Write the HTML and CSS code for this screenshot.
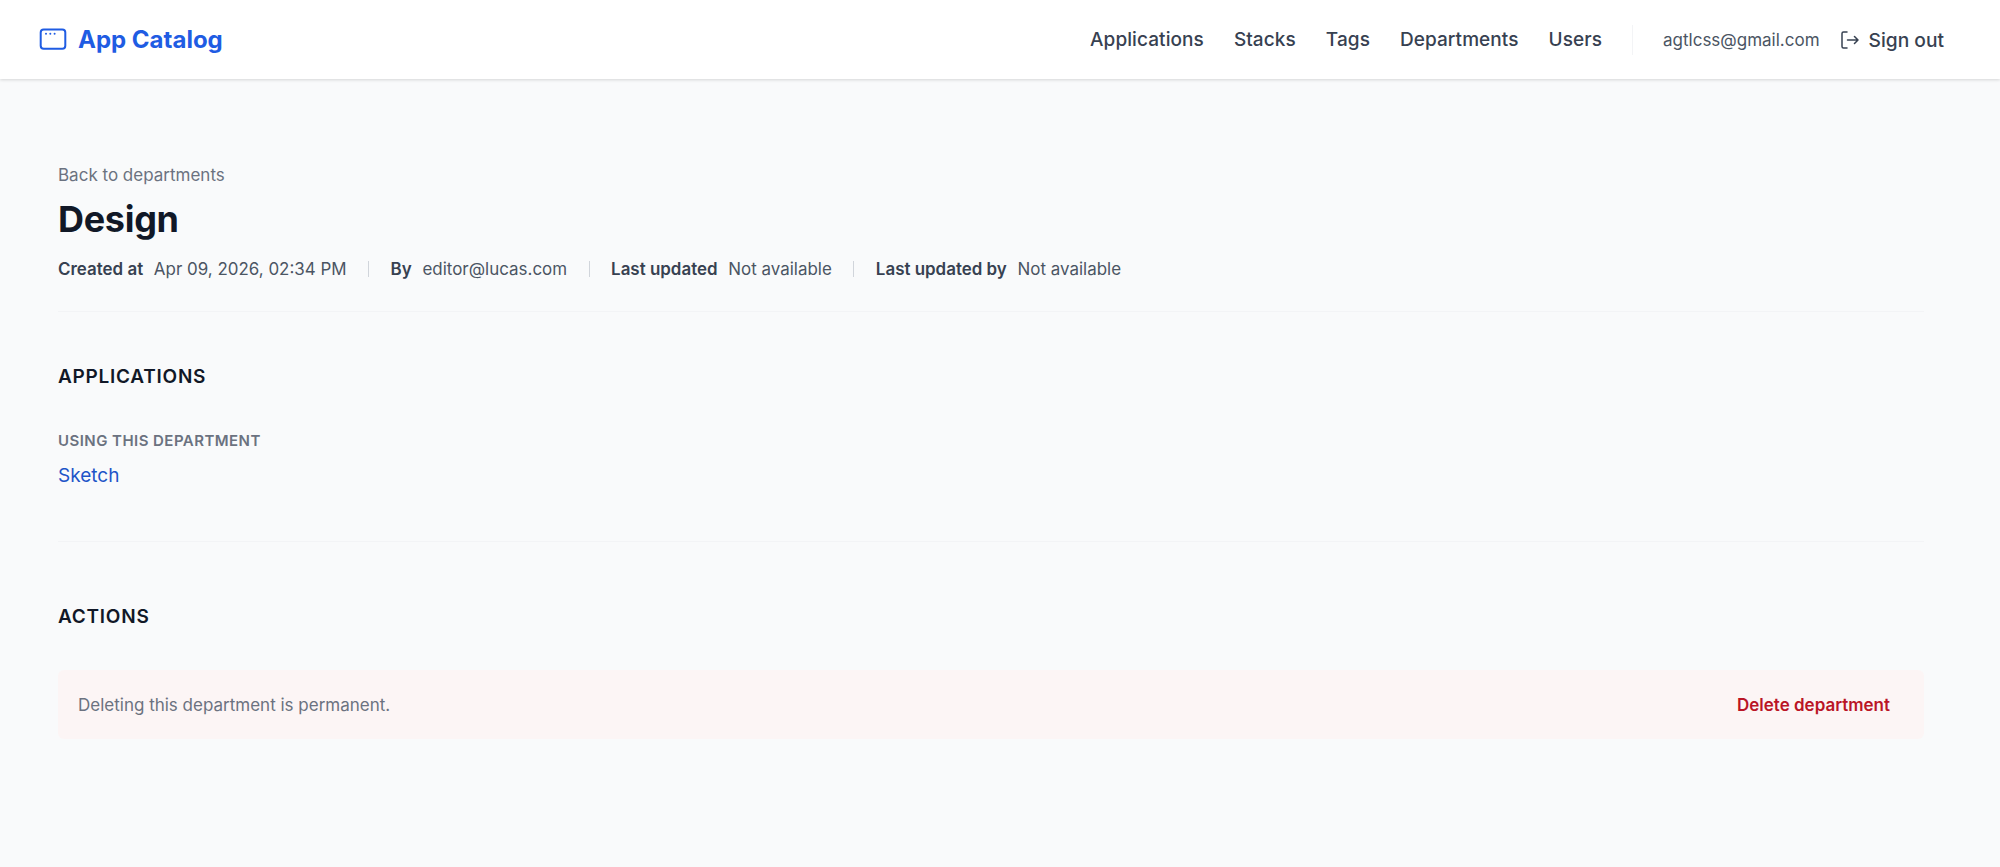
FILE: index.html
```html
<!DOCTYPE html>
<html lang="en">
<head>
    <meta charset="UTF-8">
    <meta name="viewport" content="width=device-width, initial-scale=1.0">
    <title>Design - App Catalog</title>
    <link rel="stylesheet" href="styles.css">
</head>
<body>
    <header class="navbar">
        <a class="brand" href="#">
            <svg class="brand-icon" viewBox="0 0 28 24" width="28" height="24" fill="none" stroke="currentColor" stroke-width="2" stroke-linecap="round">
                <rect x="1.700" y="1.500" width="24.600" height="19.300" rx="3"></rect>
                <path d="M7 5.800h.01M11.300 5.800h.01M15.600 5.800h.01"></path>
            </svg>
            <span>App Catalog</span>
        </a>
        <nav class="nav-links">
            <a href="#">Applications</a>
            <a href="#">Stacks</a>
            <a href="#">Tags</a>
            <a href="#">Departments</a>
            <a href="#">Users</a>
        </nav>
        <div class="nav-user">
            <span class="user-email">agtlcss@gmail.com</span>
            <a class="sign-out" href="#">
                <svg viewBox="0 0 18 18" width="18" height="18" fill="none" stroke="currentColor" stroke-width="1.500" stroke-linecap="round" stroke-linejoin="round">
                    <path d="M6 1H2.500A1.500 1.500 0 0 0 1 2.500v13A1.500 1.500 0 0 0 2.500 17H6"></path>
                    <path d="M6.500 9h10.500M13.500 5.500 17 9l-3.500 3.500"></path>
                </svg>
                <span>Sign out</span>
            </a>
        </div>
    </header>

    <main class="page">
        <a class="back-link" href="#">Back to departments</a>
        <h1 class="page-title">Design</h1>
        <div class="meta">
            <span class="meta-item"><strong>Created at</strong> Apr 09, 2026, 02:34 PM</span>
            <span class="meta-sep"></span>
            <span class="meta-item"><strong>By</strong> editor@lucas.com</span>
            <span class="meta-sep"></span>
            <span class="meta-item"><strong>Last updated</strong> Not available</span>
            <span class="meta-sep"></span>
            <span class="meta-item"><strong>Last updated by</strong> Not available</span>
        </div>

        <section class="section section-apps">
            <h2 class="section-title">APPLICATIONS</h2>
            <div class="field-label">USING THIS DEPARTMENT</div>
            <a class="app-link" href="#">Sketch</a>
        </section>

        <section class="section section-actions">
            <h2 class="section-title">ACTIONS</h2>
            <div class="danger-box">
                <span>Deleting this department is permanent.</span>
                <button class="danger-button">Delete department</button>
            </div>
        </section>
    </main>
</body>
</html>
```

FILE: styles.css
```css
* {
    box-sizing: border-box;
}
body {
    font-family: Inter, 'Liberation Sans', sans-serif;
    margin: 0;
    background-color: #f9fafb;
    color: #374151;
}
a {
    color: inherit;
    text-decoration: none;
}
.navbar {
    display: flex;
    align-items: center;
    height: 79px;
    padding: 0 56px 0 39px;
    background-color: white;
    box-shadow: 0 1px 3px rgba(0, 0, 0, 0.15);
}
.brand {
    display: flex;
    align-items: center;
    gap: 11px;
    color: #1f5ce3;
    font-size: 24px;
    font-weight: 700;
}
.nav-links {
    display: flex;
    gap: 30px;
    margin-left: auto;
    font-size: 19px;
    font-weight: 500;
    letter-spacing: 0.08px;
}
.nav-user {
    display: flex;
    align-items: center;
    height: 30px;
    margin-left: 30px;
    padding-left: 30px;
    border-left: 1px solid #f3f4f6;
}
.user-email {
    font-size: 17px;
    color: #4b5563;
}
.sign-out {
    display: flex;
    align-items: center;
    gap: 10px;
    margin-left: 21px;
    font-size: 19.200px;
    font-weight: 500;
}
.page {
    padding: 0 76px 0 58px;
}
.back-link {
    display: block;
    padding-top: 86px;
    font-size: 17px;
    line-height: 20px;
    color: #6b7280;
}
.page-title {
    margin: 10px 0 0;
    font-size: 36px;
    line-height: 48px;
    font-weight: 700;
    letter-spacing: -0.3px;
    color: #111827;
}
.meta {
    display: flex;
    align-items: center;
    height: 24px;
    margin-top: 14px;
    font-size: 16.950px;
    color: #4b5563;
}
.meta-item strong {
    margin-right: 6px;
    font-weight: 600;
    color: #374151;
}
.meta-sep {
    width: 1px;
    height: 16px;
    margin: 0 21.500px;
    background-color: #d1d5db;
}
.section {
    border-top: 1px solid #f3f4f6;
}
.section-apps {
    height: 230px;
    margin-top: 30px;
    padding-top: 53px;
}
.section-actions {
    padding-top: 63px;
}
.section-title {
    margin: 0;
    font-size: 19px;
    line-height: 24px;
    font-weight: 600;
    letter-spacing: 0.75px;
    color: #111827;
}
.field-label {
    margin-top: 42px;
    font-size: 15px;
    line-height: 20px;
    font-weight: 600;
    letter-spacing: 0.45px;
    color: #6b7280;
}
.app-link {
    display: block;
    margin-top: 13px;
    font-size: 19px;
    line-height: 24px;
    color: #1e55c8;
}
.danger-box {
    display: flex;
    align-items: center;
    justify-content: space-between;
    height: 69px;
    margin-top: 41px;
    padding: 0 34px 0 20px;
    background-color: #fcf5f5;
    border-radius: 6px;
    font-size: 17px;
    color: #6b7280;
}
.danger-button {
    padding: 0;
    border: none;
    background: none;
    font-family: inherit;
    font-size: 17px;
    font-weight: 600;
    color: #ba1526;
    cursor: pointer;
}
```
